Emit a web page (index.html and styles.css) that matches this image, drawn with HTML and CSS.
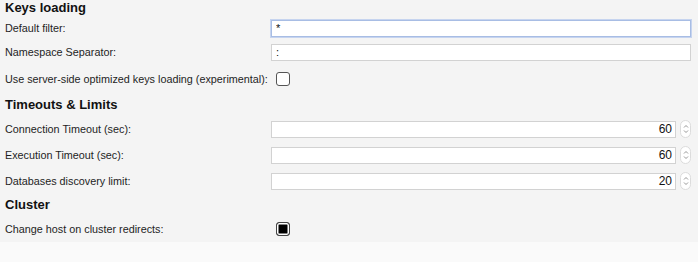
FILE: index.html
```html
<!DOCTYPE html>
<html lang="en">
<head>
  <meta charset="UTF-8">
  <title>Connection Settings</title>
  <link rel="stylesheet" href="styles.css">
</head>
<body>

  <div class="panel">
    <h3 class="title first">Keys loading</h3>

    <div class="row short">
      <label for="filter">Default filter:</label>
      <input type="text" id="filter" class="field focused" value="*">
    </div>

    <div class="row short">
      <label for="separator">Namespace Separator:</label>
      <input type="text" id="separator" class="field" value=":">
    </div>

    <div class="row tall">
      <label for="optimized">Use server-side optimized keys loading (experimental):</label>
      <span class="check" id="optimized"></span>
    </div>

    <h3 class="title">Timeouts &amp; Limits</h3>

    <div class="row">
      <label for="conn">Connection Timeout (sec):</label>
      <div class="number">
        <input type="text" id="conn" class="field num" value="60">
        <span class="spin"><svg width="6" height="12" viewBox="0 0 6 12"><path d="M1 4.5 L3 2.5 L5 4.5 M1 7.5 L3 9.5 L5 7.5" fill="none" stroke="#8a8a8a" stroke-width="0.9"/></svg></span>
      </div>
    </div>

    <div class="row">
      <label for="exec">Execution Timeout (sec):</label>
      <div class="number">
        <input type="text" id="exec" class="field num" value="60">
        <span class="spin"><svg width="6" height="12" viewBox="0 0 6 12"><path d="M1 4.5 L3 2.5 L5 4.5 M1 7.5 L3 9.5 L5 7.5" fill="none" stroke="#8a8a8a" stroke-width="0.9"/></svg></span>
      </div>
    </div>

    <div class="row">
      <label for="discovery">Databases discovery limit:</label>
      <div class="number">
        <input type="text" id="discovery" class="field num" value="20">
        <span class="spin"><svg width="6" height="12" viewBox="0 0 6 12"><path d="M1 4.5 L3 2.5 L5 4.5 M1 7.5 L3 9.5 L5 7.5" fill="none" stroke="#8a8a8a" stroke-width="0.9"/></svg></span>
      </div>
    </div>

    <h3 class="title">Cluster</h3>

    <div class="row">
      <label for="redirects">Change host on cluster redirects:</label>
      <span class="check checked" id="redirects"></span>
    </div>
  </div>

</body>
</html>
```

FILE: styles.css
```css
body {
  margin: 0;
  background-color: #fafafa;
  font-family: "Liberation Sans", Arial, Helvetica, sans-serif;
  color: #1e1e1e;
}

.panel {
  background-color: #f4f4f4;
  padding: 0 7px 0 5px;
}

.title {
  margin: 0;
  font-size: 13px;
  font-weight: bold;
  line-height: 22px;
  color: #111;
}

.title.first {
  line-height: 16px;
}

.row {
  display: grid;
  grid-template-columns: 266px 1fr;
  align-items: center;
  height: 26px;
  font-size: 10.8px;
}

.row label {
  white-space: nowrap;
}

.row.short {
  height: 24px;
}

.row.tall {
  height: 30px;
}

.field {
  box-sizing: border-box;
  width: 100%;
  height: 17px;
  padding: 0 4px;
  font-family: inherit;
  font-size: 11px;
  color: #111;
  background-color: #fff;
  border: 1px solid #d2d2d2;
  border-radius: 0;
  outline: none;
}

.field.focused {
  border-color: #a8bde4;
  box-shadow: 0 0 0 1px #c6d4ef;
}

.number {
  display: flex;
  align-items: center;
  gap: 4px;
}

.num {
  flex: 1;
  text-align: right;
  padding-right: 3px;
  font-size: 12px;
}

.spin {
  display: flex;
  align-items: center;
  justify-content: center;
  width: 9px;
  height: 16px;
  background-color: #fff;
  border: 1px solid #dcdcdc;
  border-radius: 6px;
}

.check {
  box-sizing: border-box;
  width: 14px;
  height: 14px;
  margin-left: 5px;
  background-color: #fff;
  border: 1.5px solid #555;
  border-radius: 3px;
}

.check.checked {
  border-color: #444;
  box-shadow: inset 0 0 0 1.5px #fff;
  background-color: #000;
}
```
